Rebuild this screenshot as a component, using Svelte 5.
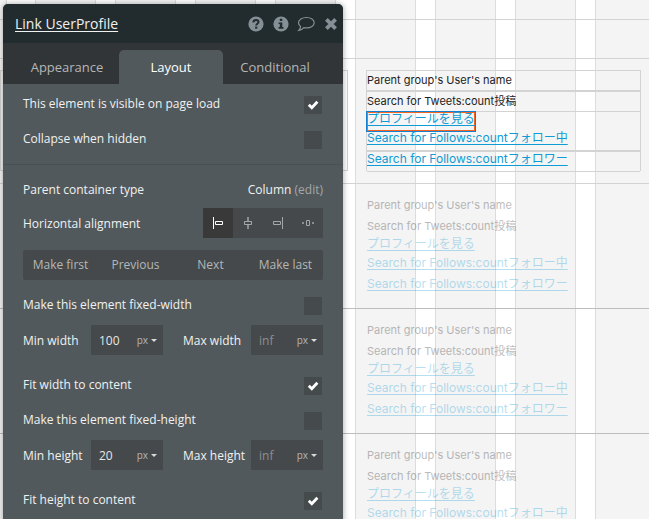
<script lang="ts">
    let tabs = ["Appearance", "Layout", "Conditional"];
    let activeTab = $state("Layout");

    let visible = $state(true);
    let collapse = $state(false);
    let alignment = $state("start");

    const alignments = ["start", "center", "end", "around"];
    const orderActions = ["Make first", "Previous", "Next", "Make last"];

    let sizes = $state([
        { name: "width", fixed: false, min: "100", max: "", fit: true },
        { name: "height", fixed: false, min: "20", max: "", fit: true },
    ]);

    const cellTexts = [
        { text: "Parent group's User's name", link: false },
        { text: "Search for Tweets:count投稿", link: false },
        { text: "プロフィールを見る", link: true },
        { text: "Search for Follows:countフォロー中", link: true },
        { text: "Search for Follows:countフォロワー", link: true },
    ];
    const selectedIndex = 2;
    const ghostCells = [1, 2, 3];
</script>

{#snippet cellContent(selected: number)}
    <div class="group">
        {#each cellTexts as item, i}
            <div class="item" class:link={item.link} class:selected={i === selected}>
                {#if item.link}
                    <a href="#profile">{item.text}</a>
                {:else}
                    <span>{item.text}</span>
                {/if}
            </div>
        {/each}
    </div>
{/snippet}

{#snippet check(id: string, label: string, get: () => boolean, set: (v: boolean) => void)}
    <div class="row check-row">
        <label for={id}>{label}</label>
        <input type="checkbox" {id} bind:checked={get, set} />
    </div>
{/snippet}

{#snippet caret()}
    <svg class="caret" viewBox="0 0 6 3"><path d="M0 0h6L3 3z" /></svg>
{/snippet}

<div class="editor">
    <main class="canvas">
        <div class="band top"></div>
        <div class="band"></div>
        <div class="cell first">
            <div class="neighbour"></div>
            {@render cellContent(selectedIndex)}
        </div>
        {#each ghostCells as cell (cell)}
            <div class="cell ghost">
                <div class="neighbour"></div>
                {@render cellContent(-1)}
            </div>
        {/each}
    </main>

    <section class="panel">
        <header>
            <a class="title" href="#element">Link UserProfile</a>
            <div class="actions">
                <button aria-label="Help">
                    <svg viewBox="0 0 16 16">
                        <circle cx="8" cy="8" r="7.6" fill="currentColor" />
                        <path d="M5.3 6.4C5.5 4.600 6.500 4 8 4c1.500 0 2.500.8 2.500 2.100 0 1.700-2.300 1.700-2.300 3.300" fill="none" stroke="#222b2d" stroke-width="2" />
                        <path d="M7.100 10.600h2.200v2.100H7.100z" fill="#222b2d" />
                    </svg>
                </button>
                <button aria-label="Info">
                    <svg viewBox="0 0 16 16">
                        <circle cx="8" cy="8" r="7.6" fill="currentColor" />
                        <path d="M6.800 2.800h2.500v2.200H6.800zM5.600 6.400h3.700v4.700h1.200v1.700H5.600v-1.700h1.200V8.100H5.600z" fill="#222b2d" />
                    </svg>
                </button>
                <button aria-label="Comment" class="wide">
                    <svg viewBox="0 0 18 16">
                        <path d="M9.500 1.500c4.400 0 7.700 2.300 7.700 5.200s-3.300 5.200-7.700 5.200c-1 0-1.900-.1-2.700-.3-1.200 1.400-2.900 2.400-5 2.800 1-1.100 1.700-2.300 1.800-3.900C2.300 9.600 1.500 8.200 1.500 6.700c0-2.900 3.500-5.200 8-5.200z" fill="none" stroke="currentColor" stroke-width="1.2" />
                    </svg>
                </button>
                <button aria-label="Close">
                    <svg viewBox="0 0 16 16">
                        <path d="M3.400 3.400l9.200 9.200M12.600 3.400l-9.200 9.200" stroke="currentColor" stroke-width="3.8" />
                    </svg>
                </button>
            </div>
        </header>

        <nav>
            {#each tabs as tab}
                <button class:active={tab === activeTab} onclick={() => (activeTab = tab)}>{tab}</button>
            {/each}
        </nav>

        <div class="body">
            <div class="block">
                {@render check("visible", "This element is visible on page load", () => visible, (v) => (visible = v))}
                {@render check("collapse", "Collapse when hidden", () => collapse, (v) => (collapse = v))}
            </div>

            <div class="block placement">
                <div class="row">
                    <span>Parent container type</span>
                    <span>Column <a class="edit" href="#parent">(edit)</a></span>
                </div>
                <div class="row">
                    <span>Horizontal alignment</span>
                    <div class="segments">
                        {#each alignments as a}
                            <button aria-label={a} class:active={a === alignment} onclick={() => (alignment = a)}>
                                <svg viewBox="0 0 12 12" fill="none" stroke="currentColor">
                                    {#if a === "start"}
                                        <path d="M1.5 0v12M3.5 4.500h7v3h-7z" />
                                    {:else if a === "center"}
                                        <path d="M6 0v4M6 8v4" stroke-width="1.5" />
                                        <path d="M2.5 4.500h7v3h-7z" />
                                    {:else if a === "end"}
                                        <path d="M10.5 0v12M1.500 4.500h7v3h-7z" />
                                    {:else}
                                        <path d="M4.500 3.500h3v5h-3zM0 6h2M10 6h2M1 5v2M11 5v2" />
                                    {/if}
                                </svg>
                            </button>
                        {/each}
                    </div>
                </div>
            </div>

            <div class="order">
                {#each orderActions as action}
                    <button>{action}</button>
                {/each}
            </div>

            {#each sizes as size}
                <div class="block size">
                    {@render check(`fixed-${size.name}`, `Make this element fixed-${size.name}`, () => size.fixed, (v) => (size.fixed = v))}
                    <div class="row limits">
                        <label for="min-{size.name}">Min {size.name}</label>
                        <div class="field">
                            <input type="text" id="min-{size.name}" bind:value={size.min} />
                            <button class="unit">px {@render caret()}</button>
                        </div>
                        <label for="max-{size.name}">Max {size.name}</label>
                        <div class="field">
                            <input type="text" id="max-{size.name}" placeholder="inf" bind:value={size.max} />
                            <button class="unit">px {@render caret()}</button>
                        </div>
                    </div>
                    <div class="fit">
                        {@render check(`fit-${size.name}`, `Fit ${size.name} to content`, () => size.fit, (v) => (size.fit = v))}
                    </div>
                </div>
            {/each}
        </div>
    </section>
</div>

<style>
    :global(body) {
        margin: 0;
    }

    .editor {
        position: relative;
        height: 100vh;
        overflow: hidden;
        font-family: "Open Sans", "Noto Sans", sans-serif;
        font-size: 12px;
    }

    button {
        padding: 0;
        border: none;
        background: none;
        color: inherit;
        font: inherit;
        cursor: pointer;
    }

    svg {
        display: block;
    }

    /* --- Canvas --- */
    .canvas {
        background: repeating-linear-gradient(
            to right,
            #fff 0 15px,
            #dcdcdc 15px 16px,
            #f4f4f4 16px 75px,
            #dcdcdc 75px 76px,
            #fff 76px 80px
        );
        background-position-x: 20px;
        font-family: Inter, "Noto Sans CJK JP", sans-serif;
        font-size: 11px;
    }

    .band {
        box-sizing: border-box;
        height: 39px;
        border-bottom: 1px solid #d3d3d3;
    }

    .band.top {
        height: 20px;
    }

    .cell {
        box-sizing: border-box;
        display: flex;
        gap: 18px;
        height: 125px;
        padding: 11px 8px 12px 0;
        border-bottom: 1px solid #d3d3d3;
    }

    .cell.ghost {
        border-color: #bdbdbd;
    }

    .neighbour {
        box-sizing: border-box;
        flex: 0 0 348px;
        border: 1px solid #d3d3d3;
    }

    .group {
        box-sizing: border-box;
        flex: 1;
        display: grid;
        grid-template-rows: 21px 20px 19px 21px 20px;
        border: 1px solid #d3d3d3;
        border-bottom: none;
    }

    .ghost .neighbour,
    .ghost .group,
    .ghost .item {
        border-color: transparent;
    }

    .item {
        border-bottom: 1px solid #d3d3d3;
        line-height: 18px;
        white-space: nowrap;
        color: #222;
    }

    .item:nth-child(3n + 1) {
        border-bottom-width: 2px;
    }

    .item.link {
        line-height: 14px;
    }

    .item a {
        color: #0f9bd3;
        font-size: 12px;
        text-underline-offset: 2px;
    }

    .ghost .item > * {
        opacity: 0.3;
    }

    .selected {
        justify-self: start;
        margin: -1px 0 -1px -1px;
        border: 1px solid #1580d0;
        box-shadow: inset 0 0 0 1px #f26522;
    }

    /* --- Property panel --- */
    .panel {
        position: absolute;
        top: 4px;
        left: 3px;
        width: 340px;
        min-height: 520px;
        border-radius: 5px 5px 0 0;
        background: #52595c;
        color: #f0f1f1;
        box-shadow: 0 0 6px rgba(0, 0, 0, 0.35);
    }

    header {
        display: flex;
        align-items: center;
        justify-content: space-between;
        height: 39px;
        padding-left: 12px;
        border-radius: 5px 5px 0 0;
        background: #222b2d;
    }

    .title {
        color: #f0f1f1;
        font-size: 14px;
        text-underline-offset: 2px;
    }

    .actions {
        display: grid;
        grid-template-columns: repeat(4, 25px);
        color: #849096;
    }

    .actions button {
        display: grid;
        place-items: center;
    }

    .actions svg {
        width: 16px;
        height: 16px;
    }

    .actions .wide svg {
        width: 18px;
    }

    nav {
        display: grid;
        grid-template-columns: repeat(3, 104px);
        height: 41px;
        padding: 7px 12px 0;
        box-sizing: border-box;
        background: #313537;
        color: #b4b7b8;
        font-size: 13px;
    }

    nav .active {
        border-radius: 5px 5px 0 0;
        background: #52595c;
        color: #fff;
    }

    .body {
        padding-top: 5px;
    }

    .block {
        display: flex;
        flex-direction: column;
        gap: 5px;
        padding: 0 20px;
    }

    .row {
        display: flex;
        align-items: center;
        justify-content: space-between;
        height: 30px;
    }

    .check-row label {
        padding-bottom: 1px;
    }

    .placement {
        gap: 4px;
        margin-top: 10px;
        padding-top: 9px;
        border-top: 1px solid #4a5053;
    }

    .edit {
        color: #a3a7a9;
        text-decoration: none;
    }

    input[type="checkbox"] {
        appearance: none;
        width: 18px;
        height: 18px;
        margin: 2px 1px 0 0;
        background: #454a4c;
    }

    input[type="checkbox"]:checked {
        background: #454a4c url("data:image/svg+xml,%3Csvg xmlns='http://www.w3.org/2000/svg' viewBox='0 0 18 18'%3E%3Cpath d='M4.800 8.800l3 3 5.600-6' fill='none' stroke='white' stroke-width='2.800'/%3E%3C/svg%3E");
    }

    .segments {
        display: flex;
        background: #45494b;
        color: #a3a7a9;
    }

    .segments button {
        display: grid;
        place-items: center;
        width: 30px;
        height: 30px;
    }

    .segments svg {
        width: 12px;
        height: 12px;
    }

    .segments .active {
        background: #393939;
        color: #fff;
    }

    .order {
        display: grid;
        grid-template-columns: repeat(4, 1fr);
        height: 30px;
        margin: 12px 20px 10px;
        border-radius: 2px;
        background: #45494b;
        color: #b4b7b8;
    }

    .order button {
        padding-bottom: 2px;
    }

    .limits {
        display: grid;
        grid-template-columns: 68px 72px 88px 72px;
    }

    .limits label:nth-of-type(2) {
        padding-left: 20px;
    }

    .field {
        display: flex;
        box-sizing: border-box;
        height: 30px;
        padding: 0 6px 0 8px;
        background: #45494b;
    }

    .field input {
        flex: 1;
        min-width: 0;
        padding: 0;
        border: none;
        outline: none;
        background: none;
        color: #e6e7e7;
        font: inherit;
    }

    .field input::placeholder {
        color: #8b8f91;
        opacity: 1;
    }

    .unit {
        display: flex;
        align-items: center;
        gap: 3px;
        color: #b4b7b8;
        font-size: 10px;
    }

    .caret {
        width: 6px;
        height: 3px;
        fill: #d8dadb;
    }

    .fit {
        margin-top: 10px;
    }

    .size + .size {
        margin-top: 5px;
    }
</style>
